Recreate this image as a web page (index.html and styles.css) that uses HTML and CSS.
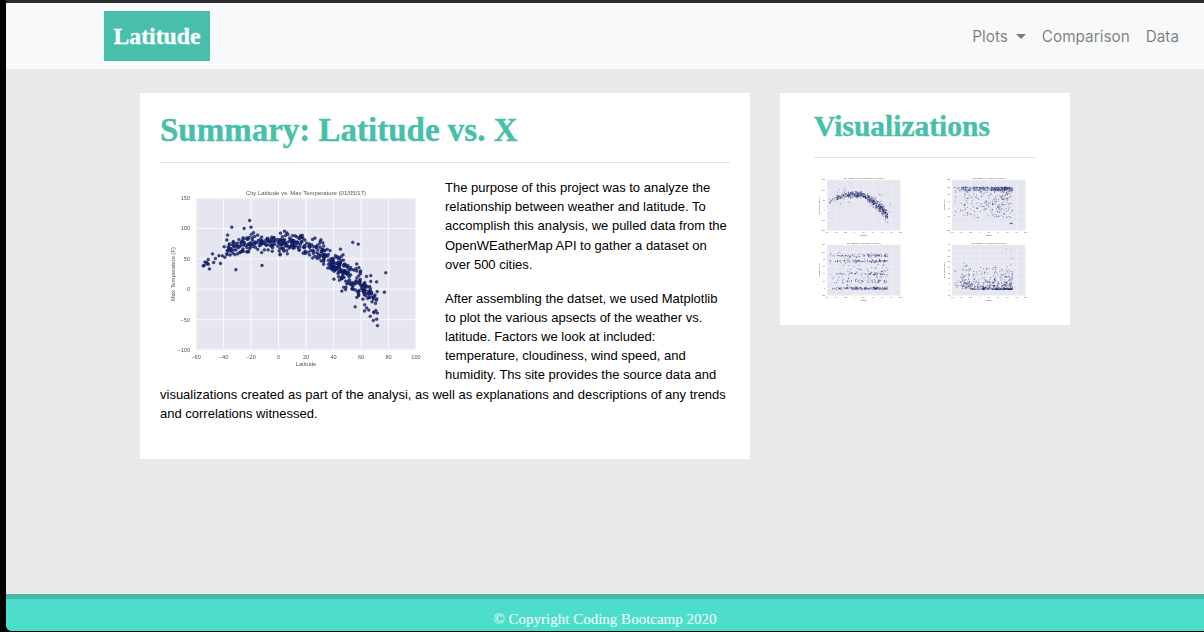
FILE: index.html
```html
<!DOCTYPE html>
<html lang="en">
<head>
  <meta charset="UTF-8">
  <title>Latitude</title>
  <link rel="stylesheet" href="styles.css">
</head>
<body>

<div class="window">
  <nav class="navbar">
    <a class="brand" href="#">Latitude</a>
    <ul class="nav-links">
      <li><a href="#">Plots<span class="caret"></span></a></li>
      <li><a href="#">Comparison</a></li>
      <li><a href="#">Data</a></li>
    </ul>
  </nav>

  <main class="content">
    <section class="card summary">
      <h1>Summary: Latitude vs. X</h1>
      <hr>
      <svg class="chart chart-main" data-kind="temp" viewBox="0 0 275 200"></svg>
      <p>The purpose of this project was to analyze the relationship between weather and latitude. To accomplish this analysis, we pulled data from the OpenWEatherMap API to gather a dataset on over 500 cities.</p>
      <p>After assembling the datset, we used Matplotlib to plot the various apsects of the weather vs. latitude. Factors we look at included: temperature, cloudiness, wind speed, and humidity. Ths site provides the source data and visualizations created as part of the analysi, as well as explanations and descriptions of any trends and correlations witnessed.</p>
    </section>

    <aside class="card side">
      <h2>Visualizations</h2>
      <hr>
      <div class="thumbs">
        <svg class="chart" data-kind="temp" viewBox="0 0 275 200"></svg>
        <svg class="chart" data-kind="humidity" viewBox="0 0 275 200"></svg>
        <svg class="chart" data-kind="cloud" viewBox="0 0 275 200"></svg>
        <svg class="chart" data-kind="wind" viewBox="0 0 275 200"></svg>
      </div>
    </aside>
  </main>

  <footer class="footer">© Copyright Coding Bootcamp 2020</footer>
</div>

<script src="script.js"></script>
</body>
</html>
```

FILE: styles.css
```css
html, body {
  height: 100%;
}

body {
  margin: 0;
  background-color: #000;
  font-family: "Liberation Sans", Arial, sans-serif;
  overflow: hidden;
}

.window {
  display: flex;
  flex-direction: column;
  box-sizing: border-box;
  height: 631px;
  margin-left: 6px;
  border-top: 3px solid #2c2c2e;
  border-bottom-left-radius: 6px;
  background-color: #e9e9e9;
  overflow: hidden;
}

.navbar {
  display: flex;
  justify-content: space-between;
  align-items: center;
  height: 66px;
  padding: 0 25px 0 98px;
  background-color: #f8f9fa;
  flex-shrink: 0;
}

.brand {
  display: block;
  width: 106px;
  line-height: 50px;
  background-color: #48bfab;
  color: #fff;
  font-family: "Liberation Serif", Georgia, serif;
  font-size: 23.7px;
  font-weight: bold;
  text-align: center;
  text-decoration: none;
  -webkit-text-stroke: 0.3px #fff;
}

.nav-links {
  display: flex;
  gap: 16px;
  margin: 0;
  padding: 0;
  list-style: none;
}

.nav-links a {
  color: rgba(0, 0, 0, 0.5);
  font-family: Inter, sans-serif;
  font-size: 15.3px;
  text-decoration: none;
}

.caret {
  display: inline-block;
  margin-left: 8px;
  vertical-align: 3px;
  border-top: 5px solid rgba(0, 0, 0, 0.5);
  border-left: 5px solid transparent;
  border-right: 5px solid transparent;
}

.content {
  display: flex;
  align-items: flex-start;
  gap: 30px;
  flex-grow: 1;
  padding: 24px 0 0 134px;
}

.card {
  box-sizing: border-box;
  background-color: #fff;
}

.summary {
  width: 610px;
  height: 366px;
  padding: 20px;
}

.side {
  width: 290px;
  height: 232px;
  padding: 17px 35px 0 34px;
}

h1, h2 {
  margin: 0;
  color: #48bfab;
  font-family: "Liberation Serif", Georgia, serif;
  font-weight: bold;
  -webkit-text-stroke: 0.4px #48bfab;
}

h1 {
  font-size: 33px;
  line-height: 34px;
}

h2 {
  font-size: 29.5px;
  line-height: 33px;
}

hr {
  margin: 14px 0 15px;
  border: 0;
  border-top: 1px solid #e2e2e2;
}

.summary hr {
  margin: 15px 0;
}

.summary p {
  margin: 0 0 14.5px;
  font-size: 13px;
  line-height: 19.2px;
  color: #000;
}

.chart {
  display: block;
  filter: blur(0.4px);
}

.chart-main {
  float: left;
  width: 275px;
  height: 200px;
  margin: 0 10px 0 0;
  filter: blur(0.6px);
}

.thumbs {
  display: grid;
  grid-template-columns: repeat(2, 92px);
  grid-auto-rows: 65px;
  column-gap: 33px;
  margin-left: 1px;
}

.thumbs .chart {
  width: 92px;
  height: 67px;
}

.thumbs circle {
  fill-opacity: 0.55;
  stroke-opacity: 0.6;
}

.footer {
  flex-shrink: 0;
  height: 37px;
  box-sizing: border-box;
  padding-top: 10px;
  border-top: 5px solid #4ab9a5;
  background-color: #4cdecb;
  color: #fff;
  font-family: "Liberation Serif", "Times New Roman", serif;
  font-size: 15px;
  line-height: 20px;
  text-align: center;
}
```

FILE: script.js
```js
// draws the matplotlib style scatter plots
const NS = "http://www.w3.org/2000/svg";

const AX = { left: 36, right: 256, top: 20, bottom: 172 };

const kinds = {
  temp: { title: "City Latitude vs. Max Temperature (01/05/17)", label: "Max Temperature (F)", ymin: -100, ymax: 150, step: 50 },
  humidity: { title: "City Latitude vs. Humidity (01/05/17)", label: "Humidity (%)", ymin: -20, ymax: 120, step: 20 },
  cloud: { title: "City Latitude vs. Cloudiness (01/05/17)", label: "Cloudiness (%)", ymin: -20, ymax: 120, step: 20 },
  wind: { title: "City Latitude vs. Wind Speed (01/05/17)", label: "Wind Speed (mph)", ymin: -5, ymax: 40, step: 5 }
};

let seed = 42;
function rnd() {
  seed = (seed * 16807) % 2147483647;
  return seed / 2147483647;
}
function gauss() {
  return (rnd() + rnd() + rnd() + rnd() - 2) * 1.2;
}

// cities are mostly in the northern band
function randomLat() {
  const r = rnd();
  if (r < 0.03) return -55 + rnd() * 15;
  if (r < 0.28) return -40 + rnd() * 40;
  if (r < 0.52) return rnd() * 30;
  return 30 + rnd() * 42;
}

function tempCurve(lat) {
  const pts = [[-55, 38], [-40, 60], [-20, 75], [0, 78], [15, 77], [30, 60], [40, 42], [50, 25], [60, 7], [72, -28]];
  for (let i = 1; i < pts.length; i++) {
    if (lat <= pts[i][0]) {
      const t = (lat - pts[i - 1][0]) / (pts[i][0] - pts[i - 1][0]);
      return pts[i - 1][1] + t * (pts[i][1] - pts[i - 1][1]);
    }
  }
  return -35;
}

function makePoints(kind) {
  const out = [];
  for (let i = 0; i < 500; i++) {
    const lat = randomLat();
    let y;
    if (kind === "temp") {
      const spread = lat > 45 ? 20 : lat > 25 ? 13 : 11;
      y = tempCurve(lat) + gauss() * spread;
    } else if (kind === "humidity") {
      y = rnd() < 0.4 ? 90 + rnd() * 10 : 100 - Math.pow(rnd(), 1.4) * 85;
    } else if (kind === "cloud") {
      const bands = [0, 0, 0, 0, 20, 40, 75, 75, 90, 90];
      y = rnd() < 0.25 ? rnd() * 100 : bands[Math.floor(rnd() * 10)] + gauss() * 2.5;
    } else {
      y = 0.5 + Math.pow(rnd(), 3) * 20;
      if (lat < -20) y += rnd() * 6;
    }
    out.push([lat, y]);
  }
  if (kind === "temp") {
    out.push([-21, 113], [-34, 102], [-25, 100], [-20, 102], [-37, 89], [54, 77], [58, 74],
      [78, 27], [77, -5], [72, -60], [-31, 32], [-12, 39], [-54, 39], [-52, 42]);
  }
  if (kind === "humidity") {
    for (let i = 0; i < 6; i++) out.push([66 + i, 0]);
  }
  if (kind === "wind") {
    out.push([58, 36], [68, 35], [70, 28], [68, 22]);
  }
  return out;
}

function el(parent, name, attrs, text) {
  const node = document.createElementNS(NS, name);
  for (const key in attrs) node.setAttribute(key, attrs[key]);
  if (text !== undefined) node.textContent = text;
  parent.appendChild(node);
  return node;
}

function drawChart(svg) {
  const cfg = kinds[svg.dataset.kind];
  const sx = v => AX.left + (v + 60) / 160 * (AX.right - AX.left);
  const sy = v => AX.bottom - (v - cfg.ymin) / (cfg.ymax - cfg.ymin) * (AX.bottom - AX.top);
  const small = { "font-family": "Liberation Sans, sans-serif", "font-size": 5.6, fill: "#555" };

  el(svg, "rect", { x: AX.left, y: AX.top, width: AX.right - AX.left, height: AX.bottom - AX.top, fill: "#e6e6f0" });

  for (let x = -60; x <= 100; x += 20) {
    el(svg, "line", { x1: sx(x), x2: sx(x), y1: AX.top, y2: AX.bottom, stroke: "#fff", "stroke-width": 0.8 });
    el(svg, "text", { ...small, x: sx(x), y: AX.bottom + 8.5, "text-anchor": "middle" }, String(x).replace("-", "−"));
  }
  for (let y = cfg.ymin; y <= cfg.ymax; y += cfg.step) {
    el(svg, "line", { x1: AX.left, x2: AX.right, y1: sy(y), y2: sy(y), stroke: "#fff", "stroke-width": 0.8 });
    el(svg, "text", { ...small, x: AX.left - 6, y: sy(y) + 2, "text-anchor": "end" }, String(y).replace("-", "−"));
  }

  makePoints(svg.dataset.kind).forEach(p => {
    el(svg, "circle", { cx: sx(p[0]), cy: sy(p[1]), r: 1.4, fill: "#1a2c8c", stroke: "#050a30", "stroke-width": 0.4, "fill-opacity": 0.85 });
  });

  el(svg, "text", { ...small, x: (AX.left + AX.right) / 2, y: AX.top - 3, "text-anchor": "middle", "font-size": 6 }, cfg.title);
  el(svg, "text", { ...small, x: (AX.left + AX.right) / 2, y: AX.bottom + 16, "text-anchor": "middle", "font-size": 5.8 }, "Latitude");
  const cy = (AX.top + AX.bottom) / 2;
  el(svg, "text", { ...small, x: 15, y: cy, "text-anchor": "middle", "font-size": 5.8, transform: `rotate(-90 15 ${cy})` }, cfg.label);
}

document.querySelectorAll(".chart").forEach(drawChart);
```
